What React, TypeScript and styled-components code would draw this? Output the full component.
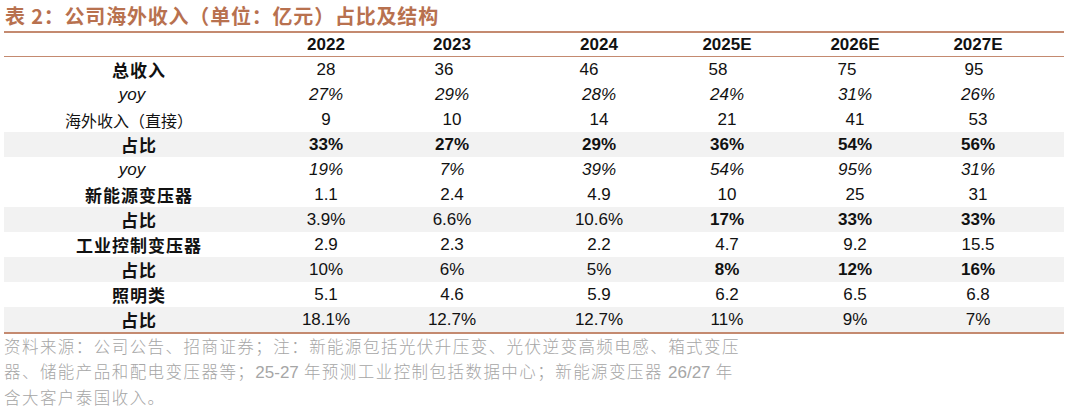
import React from 'react';
import styled, { createGlobalStyle } from 'styled-components';

const GlobalStyle = createGlobalStyle`
  body {
    margin: 0;
    background: #ffffff;
  }
`;

const Page = styled.div`
  width: 1060px;
  padding-left: 4px;
  font-family: "Liberation Sans", Arial, "Noto Sans CJK SC", sans-serif;
  color: #111111;
`;

const Title = styled.div`
  height: 31px;
  padding-left: 1px;
  box-sizing: border-box;
  padding-top: 2px;
  line-height: 28px;
  font-family: "Noto Sans CJK SC", sans-serif;
  font-weight: 700;
  font-size: 20px;
  letter-spacing: 0.8px;
  color: #b8714f;
`;

const Table = styled.div`
  border-top: 2px solid #c48a70;
  border-bottom: 2px solid #c48a70;
`;

const COLS = '270px 104px 148px 146px 110px 146px 100px 1fr';

const HeaderRow = styled.div`
  display: grid;
  grid-template-columns: ${COLS};
  height: 23px;
  align-items: center;
  border-bottom: 1px solid #c48a70;
`;

const HeadCell = styled.div`
  text-align: center;
  font-weight: 700;
  font-size: 17px;
`;

const Row = styled.div<{ $shade?: boolean }>`
  display: grid;
  grid-template-columns: ${COLS};
  height: 25px;
  align-items: center;
  background: ${(p) => (p.$shade ? '#f2f2f2' : 'transparent')};
`;

const Label = styled.div<{ $bold?: boolean; $italic?: boolean; $nudge?: number }>`
  text-align: center;
  font-family: ${(p) =>
    p.$italic ? '"Liberation Sans", Arial, sans-serif' : '"Noto Sans CJK SC", sans-serif'};
  font-size: ${(p) => (p.$bold || p.$italic ? '17px' : '16px')};
  font-style: ${(p) => (p.$italic ? 'italic' : 'normal')};
  font-weight: ${(p) => (p.$bold ? 700 : 400)};
  letter-spacing: ${(p) => (p.$bold ? '1px' : '0')};
  padding-right: ${(p) => (p.$nudge ?? 0) * 2}px;
`;

const Cell = styled.div<{ $bold?: boolean; $italic?: boolean; $nudge?: number }>`
  text-align: center;
  font-size: 17px;
  font-weight: ${(p) => (p.$bold ? 700 : 400)};
  font-style: ${(p) => (p.$italic ? 'italic' : 'normal')};
  padding-right: ${(p) => (p.$nudge ?? 0) * 2}px;
`;

const Notes = styled.div`
  font-family: "Noto Sans CJK SC", sans-serif;
  font-size: 16.5px;
  font-weight: 300;
  line-height: 25px;
  letter-spacing: 1.45px;
  color: #a6a6a6;
`;

const Num = styled.span`
  font-family: "Liberation Sans", Arial, sans-serif;
  font-weight: 400;
  font-size: 17px;
  letter-spacing: 0;
`;

type RowData = {
  label: string;
  bold?: boolean;
  italic?: boolean;
  shade?: boolean;
  labelNudge?: number;
  values: string[];
  boldCells?: boolean[];
  nudges?: number[];
};

const years = ['2022', '2023', '2024', '2025E', '2026E', '2027E'];

const rows: RowData[] = [
  { label: '总收入', bold: true, values: ['28', '36', '46', '58', '75', '95'], nudges: [0, 8, 10, 9, 8, 4] },
  { label: 'yoy', italic: true, labelNudge: 7, values: ['27%', '29%', '28%', '24%', '31%', '26%'] },
  { label: '海外收入（直接）', labelNudge: 10, values: ['9', '10', '14', '21', '41', '53'] },
  {
    label: '占比',
    bold: true,
    shade: true,
    values: ['33%', '27%', '29%', '36%', '54%', '56%'],
    boldCells: [true, true, true, true, true, true],
  },
  { label: 'yoy', italic: true, labelNudge: 7, values: ['19%', '7%', '39%', '54%', '95%', '31%'] },
  { label: '新能源变压器', bold: true, values: ['1.1', '2.4', '4.9', '10', '25', '31'] },
  {
    label: '占比',
    bold: true,
    shade: true,
    values: ['3.9%', '6.6%', '10.6%', '17%', '33%', '33%'],
    boldCells: [false, false, false, true, true, true],
  },
  { label: '工业控制变压器', bold: true, values: ['2.9', '2.3', '2.2', '4.7', '9.2', '15.5'] },
  {
    label: '占比',
    bold: true,
    shade: true,
    values: ['10%', '6%', '5%', '8%', '12%', '16%'],
    boldCells: [false, false, false, true, true, true],
  },
  { label: '照明类', bold: true, values: ['5.1', '4.6', '5.9', '6.2', '6.5', '6.8'] },
  { label: '占比', bold: true, shade: true, values: ['18.1%', '12.7%', '12.7%', '11%', '9%', '7%'] },
];

const App: React.FC = () => {
  return (
    <Page>
      <GlobalStyle />
      <Title>表 2：公司海外收入（单位：亿元）占比及结构</Title>
      <Table>
        <HeaderRow>
          <div />
          {years.map((y) => (
            <HeadCell key={y}>{y}</HeadCell>
          ))}
          <div />
        </HeaderRow>
        {rows.map((r, i) => (
          <Row key={i} $shade={r.shade}>
            <Label $bold={r.bold} $italic={r.italic} $nudge={r.labelNudge}>
              {r.label}
            </Label>
            {r.values.map((v, j) => (
              <Cell
                key={j}
                $bold={r.boldCells?.[j]}
                $italic={r.italic}
                $nudge={r.nudges?.[j]}
              >
                {v}
              </Cell>
            ))}
            <div />
          </Row>
        ))}
      </Table>
      <Notes>
        资料来源：公司公告、招商证券；注：新能源包括光伏升压变、光伏逆变高频电感、箱式变压
        <br />
        器、储能产品和配电变压器等；<Num>25-27</Num> 年预测工业控制包括数据中心；新能源变压器 <Num>26/27</Num> 年
        <br />
        含大客户泰国收入。
      </Notes>
    </Page>
  );
};

export default App;
